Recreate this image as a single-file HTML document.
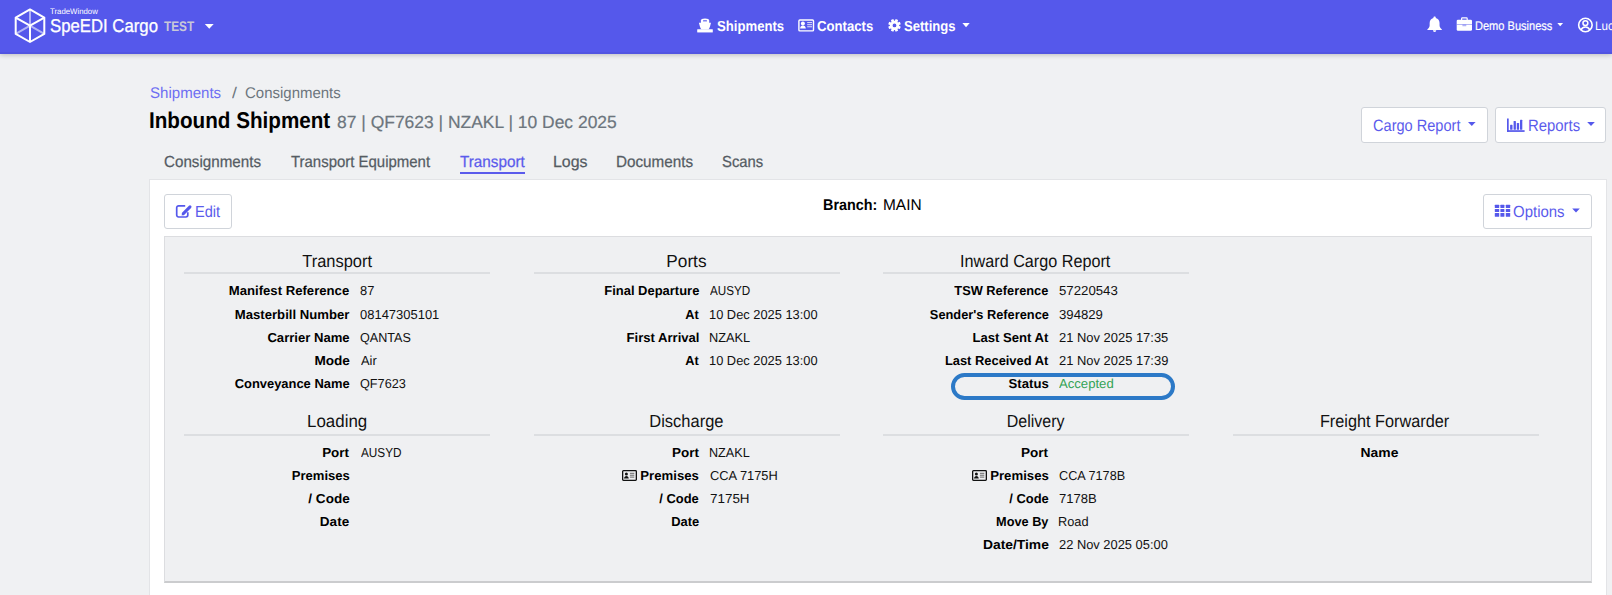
<!DOCTYPE html><html><head><meta charset="utf-8"><style>
*{margin:0;padding:0;box-sizing:border-box}
html,body{width:1612px;height:595px;overflow:hidden;background:#f0f1f3;font-family:"Liberation Sans",sans-serif}
.t{position:absolute;white-space:nowrap;line-height:1;text-rendering:geometricPrecision}
.abs{position:absolute}
svg{position:absolute;overflow:visible}
#nav{position:absolute;left:0;top:0;width:1612px;height:54px;background:#5558eb;box-shadow:inset 0 -2px 0 rgba(0,0,0,.04),0 1px 5px rgba(0,0,0,.22)}
.btn{position:absolute;background:#fff;border:1px solid #d0d4da;border-radius:3px}
#card{position:absolute;left:149px;top:179px;width:1458px;height:430px;background:#fff;border:1px solid #e3e4e7}
#panel{position:absolute;left:164px;top:236px;width:1428px;height:347px;background:#eff0f2;border:1px solid #dcdde0;border-bottom:2px solid #cbccce}
.hl{position:absolute;height:2px;background:#dcdee1;width:306px}
</style></head><body>
<div id="nav"></div>
<div class="t" style="top:8px;font-size:8px;font-weight:400;color:#ffffff;left:50.22px;transform-origin:0 0;transform:scaleX(0.9742);">TradeWindow</div>
<div class="t" style="top:17px;font-size:18.5px;font-weight:400;color:#ffffff;left:49.63px;transform-origin:0 0;transform:scaleX(0.9049);-webkit-text-stroke:0.3px #fff">SpeEDI Cargo</div>
<div class="t" style="top:19px;font-size:14px;font-weight:700;color:#c8c8d8;left:163.96px;transform-origin:0 0;transform:scaleX(0.8426);">TEST</div>
<div class="t" style="top:20px;font-size:14.5px;font-weight:700;color:#ffffff;left:716.50px;transform-origin:0 0;transform:scaleX(0.9061);">Shipments</div>
<div class="t" style="top:20px;font-size:14.5px;font-weight:700;color:#ffffff;left:817.34px;transform-origin:0 0;transform:scaleX(0.9072);">Contacts</div>
<div class="t" style="top:20px;font-size:14.5px;font-weight:700;color:#ffffff;left:904.00px;transform-origin:0 0;transform:scaleX(0.9028);">Settings</div>
<div class="t" style="top:20px;font-size:12.5px;font-weight:400;color:#ffffff;left:1474.51px;transform-origin:0 0;transform:scaleX(0.8838);-webkit-text-stroke:0.2px #fff">Demo Business</div>
<div class="t" style="top:20px;font-size:12.5px;font-weight:400;color:#ffffff;left:1594.66px;transform-origin:0 0;transform:scaleX(0.9300);">Luc</div>
<div class="t" style="top:86px;font-size:15.5px;font-weight:400;color:#6e6ef2;left:149.91px;transform-origin:0 0;transform:scaleX(0.9714);">Shipments</div>
<div class="t" style="top:86px;font-size:15.5px;font-weight:400;color:#6c757d;left:232.00px;transform-origin:0 0;transform:scaleX(1.1416);">/</div>
<div class="t" style="top:86px;font-size:15.5px;font-weight:400;color:#6c757d;left:245.35px;transform-origin:0 0;transform:scaleX(0.9666);">Consignments</div>
<div class="t" style="top:109px;font-size:22.8px;font-weight:700;color:#000;left:149.25px;transform-origin:0 0;transform:scaleX(0.9059);">Inbound Shipment</div>
<div class="t" style="top:114px;font-size:17.5px;font-weight:400;color:#6c757d;left:336.66px;transform-origin:0 0;transform:scaleX(0.9973);-webkit-text-stroke:0.2px #6c757d">87 | QF7623 | NZAKL | 10 Dec 2025</div>
<div class="t" style="top:155px;font-size:16px;font-weight:400;color:#555c63;left:163.74px;transform-origin:0 0;transform:scaleX(0.9482);-webkit-text-stroke:0.25px #555c63">Consignments</div>
<div class="t" style="top:155px;font-size:16px;font-weight:400;color:#555c63;left:290.75px;transform-origin:0 0;transform:scaleX(0.9345);-webkit-text-stroke:0.25px #555c63">Transport Equipment</div>
<div class="t" style="top:155px;font-size:16px;font-weight:400;color:#5b5bec;left:459.65px;transform-origin:0 0;transform:scaleX(0.9557);-webkit-text-stroke:0.25px #5b5bec">Transport</div>
<div class="t" style="top:155px;font-size:16px;font-weight:400;color:#555c63;left:552.61px;transform-origin:0 0;transform:scaleX(0.9951);-webkit-text-stroke:0.25px #555c63">Logs</div>
<div class="t" style="top:155px;font-size:16px;font-weight:400;color:#555c63;left:615.57px;transform-origin:0 0;transform:scaleX(0.9522);-webkit-text-stroke:0.25px #555c63">Documents</div>
<div class="t" style="top:155px;font-size:16px;font-weight:400;color:#555c63;left:721.62px;transform-origin:0 0;transform:scaleX(0.9259);-webkit-text-stroke:0.25px #555c63">Scans</div>
<div class="abs" style="left:459.6px;top:171.5px;width:65px;height:2px;background:#5b5bec"></div>
<div class="btn" style="left:1361px;top:107px;width:127px;height:36px"></div>
<div class="btn" style="left:1495px;top:107px;width:111px;height:36px"></div>
<div class="t" style="top:118px;font-size:16.5px;font-weight:400;color:#5b5bec;left:1373.27px;transform-origin:0 0;transform:scaleX(0.8832);">Cargo Report</div>
<div class="t" style="top:118px;font-size:16.5px;font-weight:400;color:#5b5bec;left:1527.70px;transform-origin:0 0;transform:scaleX(0.9025);">Reports</div>
<div id="card"></div>
<div class="btn" style="left:164px;top:194px;width:68px;height:35px"></div>
<div class="t" style="top:205px;font-size:16px;font-weight:400;color:#5b5bec;left:194.62px;transform-origin:0 0;transform:scaleX(0.9100);">Edit</div>
<div class="btn" style="left:1483px;top:194px;width:109px;height:35px"></div>
<div class="t" style="top:205px;font-size:16px;font-weight:400;color:#5b5bec;left:1513.41px;transform-origin:0 0;transform:scaleX(0.9360);">Options</div>
<div class="t" style="top:198px;font-size:15.5px;font-weight:700;color:#000;left:823.36px;transform-origin:0 0;transform:scaleX(0.9287);">Branch:</div>
<div class="t" style="top:198px;font-size:15.5px;font-weight:400;color:#000;left:883.35px;transform-origin:0 0;transform:scaleX(0.9960);">MAIN</div>
<div id="panel"></div>
<div class="t" style="top:253px;font-size:17.5px;font-weight:400;color:#111;left:299.60px;transform-origin:37.12px 0;transform:scaleX(0.9403);">Transport</div>
<div class="hl" style="left:184px;top:272px"></div>
<div class="t" style="top:413px;font-size:17.5px;font-weight:400;color:#111;left:305.76px;transform-origin:31.14px 0;transform:scaleX(0.9654);">Loading</div>
<div class="hl" style="left:184px;top:433.5px"></div>
<div class="t" style="top:253px;font-size:17.5px;font-weight:400;color:#111;left:665.67px;transform-origin:20.42px 0;transform:scaleX(0.9836);">Ports</div>
<div class="hl" style="left:533.6px;top:272px"></div>
<div class="t" style="top:413px;font-size:17.5px;font-weight:400;color:#111;left:646.51px;transform-origin:39.39px 0;transform:scaleX(0.9426);">Discharge</div>
<div class="hl" style="left:533.6px;top:433.5px"></div>
<div class="t" style="top:253px;font-size:17.5px;font-weight:400;color:#111;left:953.81px;transform-origin:81.22px 0;transform:scaleX(0.9249);">Inward Cargo Report</div>
<div class="hl" style="left:883.2px;top:272px"></div>
<div class="t" style="top:413px;font-size:17.5px;font-weight:400;color:#111;left:1003.58px;transform-origin:31.60px 0;transform:scaleX(0.9138);">Delivery</div>
<div class="hl" style="left:883.2px;top:433.5px"></div>
<div class="t" style="top:413px;font-size:17.5px;font-weight:400;color:#111;left:1314.99px;transform-origin:69.53px 0;transform:scaleX(0.9296);">Freight Forwarder</div>
<div class="hl" style="left:1232.8px;top:433.5px"></div>
<div class="t" style="top:284px;font-size:13px;font-weight:700;color:#000;left:230.40px;width:121.21px;transform-origin:119.21px 0;transform:scaleX(1.0106);">Manifest Reference</div>
<div class="t" style="top:284px;font-size:13px;font-weight:400;color:#111;left:360.05px;transform-origin:0 0;transform:scaleX(0.9925);">87</div>
<div class="t" style="top:308px;font-size:13px;font-weight:700;color:#000;left:236.00px;width:115.41px;transform-origin:113.41px 0;transform:scaleX(1.0111);">Masterbill Number</div>
<div class="t" style="top:308px;font-size:13px;font-weight:400;color:#111;left:360.10px;transform-origin:0 0;transform:scaleX(0.9974);">08147305101</div>
<div class="t" style="top:331px;font-size:13px;font-weight:700;color:#000;left:267.95px;width:83.66px;transform-origin:81.66px 0;transform:scaleX(1.0074);">Carrier Name</div>
<div class="t" style="top:331px;font-size:13px;font-weight:400;color:#111;left:360.02px;transform-origin:0 0;transform:scaleX(0.9688);">QANTAS</div>
<div class="t" style="top:354px;font-size:13px;font-weight:700;color:#000;left:315.72px;width:35.94px;transform-origin:33.94px 0;transform:scaleX(1.0475);">Mode</div>
<div class="t" style="top:354px;font-size:13px;font-weight:400;color:#111;left:360.55px;transform-origin:0 0;transform:scaleX(0.9872);">Air</div>
<div class="t" style="top:377px;font-size:13px;font-weight:700;color:#000;left:234.00px;width:117.61px;transform-origin:115.61px 0;transform:scaleX(0.9943);">Conveyance Name</div>
<div class="t" style="top:377px;font-size:13px;font-weight:400;color:#111;left:360.01px;transform-origin:0 0;transform:scaleX(0.9760);">QF7623</div>
<div class="t" style="top:284px;font-size:13px;font-weight:700;color:#000;left:603.80px;width:97.35px;transform-origin:95.35px 0;transform:scaleX(0.9973);">Final Departure</div>
<div class="t" style="top:284px;font-size:13px;font-weight:400;color:#111;left:710.36px;transform-origin:0 0;transform:scaleX(0.8980);">AUSYD</div>
<div class="t" style="top:308px;font-size:13px;font-weight:700;color:#000;left:685.10px;width:15.72px;transform-origin:13.72px 0;transform:scaleX(0.9811);">At</div>
<div class="t" style="top:308px;font-size:13px;font-weight:400;color:#111;left:709.41px;transform-origin:0 0;transform:scaleX(0.9880);">10 Dec 2025 13:00</div>
<div class="t" style="top:331px;font-size:13px;font-weight:700;color:#000;left:627.11px;width:74.49px;transform-origin:72.49px 0;transform:scaleX(1.0064);">First Arrival</div>
<div class="t" style="top:331px;font-size:13px;font-weight:400;color:#111;left:709.37px;transform-origin:0 0;transform:scaleX(0.9827);">NZAKL</div>
<div class="t" style="top:354px;font-size:13px;font-weight:700;color:#000;left:685.10px;width:15.72px;transform-origin:13.72px 0;transform:scaleX(0.9811);">At</div>
<div class="t" style="top:354px;font-size:13px;font-weight:400;color:#111;left:709.41px;transform-origin:0 0;transform:scaleX(0.9880);">10 Dec 2025 13:00</div>
<div class="t" style="top:284px;font-size:13px;font-weight:700;color:#000;left:953.24px;width:97.36px;transform-origin:95.36px 0;transform:scaleX(0.9863);">TSW Reference</div>
<div class="t" style="top:284px;font-size:13px;font-weight:400;color:#111;left:1058.94px;transform-origin:0 0;transform:scaleX(1.0159);">57220543</div>
<div class="t" style="top:308px;font-size:13px;font-weight:700;color:#000;left:927.74px;width:122.87px;transform-origin:120.87px 0;transform:scaleX(0.9846);">Sender's Reference</div>
<div class="t" style="top:308px;font-size:13px;font-weight:400;color:#111;left:1058.99px;transform-origin:0 0;transform:scaleX(1.0130);">394829</div>
<div class="t" style="top:331px;font-size:13px;font-weight:700;color:#000;left:972.95px;width:77.36px;transform-origin:75.36px 0;transform:scaleX(1.0081);">Last Sent At</div>
<div class="t" style="top:331px;font-size:13px;font-weight:400;color:#111;left:1058.85px;transform-origin:0 0;transform:scaleX(0.9945);">21 Nov 2025 17:35</div>
<div class="t" style="top:354px;font-size:13px;font-weight:700;color:#000;left:944.05px;width:106.28px;transform-origin:104.28px 0;transform:scaleX(0.9913);">Last Received At</div>
<div class="t" style="top:354px;font-size:13px;font-weight:400;color:#111;left:1058.85px;transform-origin:0 0;transform:scaleX(0.9954);">21 Nov 2025 17:39</div>
<div class="t" style="top:377px;font-size:13px;font-weight:700;color:#000;left:1009.01px;width:41.73px;transform-origin:39.73px 0;transform:scaleX(1.0103);">Status</div>
<div class="t" style="top:377px;font-size:13px;font-weight:400;color:#34a355;left:1059.45px;transform-origin:0 0;transform:scaleX(1.0094);">Accepted</div>
<div class="t" style="top:446px;font-size:13px;font-weight:700;color:#000;left:323.35px;width:28.00px;transform-origin:26.00px 0;transform:scaleX(1.0320);">Port</div>
<div class="t" style="top:446px;font-size:13px;font-weight:400;color:#111;left:360.55px;transform-origin:0 0;transform:scaleX(0.9048);">AUSYD</div>
<div class="t" style="top:469px;font-size:13px;font-weight:700;color:#000;left:291.90px;width:59.82px;transform-origin:57.82px 0;transform:scaleX(1.0044);">Premises</div>
<div class="t" style="top:492px;font-size:13px;font-weight:700;color:#000;left:309.92px;width:41.72px;transform-origin:39.72px 0;transform:scaleX(1.0421);">/ Code</div>
<div class="t" style="top:515px;font-size:13px;font-weight:700;color:#000;left:321.47px;width:30.18px;transform-origin:28.18px 0;transform:scaleX(1.0409);">Date</div>
<div class="t" style="top:446px;font-size:13px;font-weight:700;color:#000;left:672.86px;width:28.00px;transform-origin:26.00px 0;transform:scaleX(1.0360);">Port</div>
<div class="t" style="top:446px;font-size:13px;font-weight:400;color:#111;left:709.38px;transform-origin:0 0;transform:scaleX(0.9703);">NZAKL</div>
<svg style="left:622.4px;top:470.0px" width="15" height="11" viewBox="0 0 15 11"><rect x="0.65" y="0.65" width="13.7" height="9.7" rx="0.8" fill="none" stroke="#111" stroke-width="1.3"/><circle cx="4.4" cy="3.9" r="1.5" fill="#111"/><path d="M2,8.6 c0.2,-1.7 1.1,-2.6 2.4,-2.6 s2.2,0.9 2.4,2.6z" fill="#111"/><rect x="7.9" y="2.8" width="4.4" height="1" fill="#666"/><rect x="7.9" y="4.7" width="4.4" height="1" fill="#666"/><rect x="7.9" y="6.6" width="4.4" height="1" fill="#666"/></svg>
<div class="t" style="top:469px;font-size:13px;font-weight:700;color:#000;left:641.41px;width:59.82px;transform-origin:57.82px 0;transform:scaleX(1.0115);">Premises</div>
<div class="t" style="top:469px;font-size:13px;font-weight:400;color:#111;left:709.76px;transform-origin:0 0;transform:scaleX(0.9873);">CCA 7175H</div>
<div class="t" style="top:492px;font-size:13px;font-weight:700;color:#000;left:659.40px;width:41.72px;transform-origin:39.72px 0;transform:scaleX(0.9950);">/ Code</div>
<div class="t" style="top:492px;font-size:13px;font-weight:400;color:#111;left:709.73px;transform-origin:0 0;transform:scaleX(1.0328);">7175H</div>
<div class="t" style="top:515px;font-size:13px;font-weight:700;color:#000;left:670.95px;width:30.18px;transform-origin:28.18px 0;transform:scaleX(0.9950);">Date</div>
<div class="t" style="top:446px;font-size:13px;font-weight:700;color:#000;left:1022.36px;width:28.00px;transform-origin:26.00px 0;transform:scaleX(1.0400);">Port</div>
<svg style="left:971.9px;top:470.0px" width="15" height="11" viewBox="0 0 15 11"><rect x="0.65" y="0.65" width="13.7" height="9.7" rx="0.8" fill="none" stroke="#111" stroke-width="1.3"/><circle cx="4.4" cy="3.9" r="1.5" fill="#111"/><path d="M2,8.6 c0.2,-1.7 1.1,-2.6 2.4,-2.6 s2.2,0.9 2.4,2.6z" fill="#111"/><rect x="7.9" y="2.8" width="4.4" height="1" fill="#666"/><rect x="7.9" y="4.7" width="4.4" height="1" fill="#666"/><rect x="7.9" y="6.6" width="4.4" height="1" fill="#666"/></svg>
<div class="t" style="top:469px;font-size:13px;font-weight:700;color:#000;left:990.91px;width:59.82px;transform-origin:57.82px 0;transform:scaleX(1.0151);">Premises</div>
<div class="t" style="top:469px;font-size:13px;font-weight:400;color:#111;left:1058.87px;transform-origin:0 0;transform:scaleX(0.9730);">CCA 7178B</div>
<div class="t" style="top:492px;font-size:13px;font-weight:700;color:#000;left:1008.90px;width:41.72px;transform-origin:39.72px 0;transform:scaleX(0.9950);">/ Code</div>
<div class="t" style="top:492px;font-size:13px;font-weight:400;color:#111;left:1058.85px;transform-origin:0 0;transform:scaleX(1.0041);">7178B</div>
<div class="t" style="top:515px;font-size:13px;font-weight:700;color:#000;left:994.80px;width:55.46px;transform-origin:53.46px 0;transform:scaleX(0.9800);">Move By</div>
<div class="t" style="top:515px;font-size:13px;font-weight:400;color:#111;left:1058.47px;transform-origin:0 0;transform:scaleX(0.9829);">Road</div>
<div class="t" style="top:538px;font-size:13px;font-weight:700;color:#000;left:986.78px;width:63.89px;transform-origin:61.89px 0;transform:scaleX(1.0660);">Date/Time</div>
<div class="t" style="top:538px;font-size:13px;font-weight:400;color:#111;left:1058.86px;transform-origin:0 0;transform:scaleX(0.9903);">22 Nov 2025 05:00</div>
<div class="t" style="top:446px;font-size:13px;font-weight:700;color:#000;left:1362.83px;width:37.41px;transform-origin:35.41px 0;transform:scaleX(1.0688);">Name</div>
<svg style="left:0;top:0;width:1612px;height:595px" width="1612" height="595" viewBox="0 0 1612 595"><g fill="none" stroke="#fff" stroke-width="2" stroke-linejoin="round"><polygon points="30,9.4 44.3,17.6 44.3,33.9 30,42 15.7,33.9 15.7,17.6"/><path d="M15.7,17.6 L30,25.7 L44.3,17.6 M30,25.7 L30,42"/></g><path d="M30,9.4 L30,25.7 M15.7,33.9 L30,25.7 L44.3,33.9" stroke="#fff" stroke-opacity="0.55" stroke-width="2" fill="none"/><polygon points="204.8,24 213.7,24 209.25,28.8" fill="#fff"/><polygon points="962.4,23 969.7,23 966.05,27.2" fill="#fff"/><polygon points="1557.3,23 1563.1,23 1560.20,26.2" fill="#fff"/><polygon points="1468,122 1475.6,122 1471.80,126" fill="#5558eb"/><polygon points="1587.2,122 1594.8,122 1591.00,126" fill="#5558eb"/><polygon points="1572.2,208.5 1579.8,208.5 1576.00,212.5" fill="#5558eb"/><g fill="#fff"><path d="M700.9,23.2 V20.6 Q700.9,18.4 705,18.4 Q709.2,18.4 709.2,20.6 V23.2z"/><path d="M698.9,22.8 H711 L710,26.4 Q709.4,28.6 708.4,29.4 H701.5 Q700.5,28.6 699.9,26.4z"/><rect x="697.2" y="29.3" width="15.6" height="3.3" rx="0.5"/></g><rect x="703" y="20.1" width="4" height="1.5" rx="0.6" fill="#5558eb" opacity="0.75"/><path d="M697.5,32.3 h15" stroke="#5558eb" stroke-width="0.6" stroke-dasharray="1 1" opacity="0.5"/><rect x="798.9" y="20" width="14.6" height="10.9" rx="1" fill="none" stroke="#fff" stroke-width="1.4"/><circle cx="802.9" cy="23.4" r="2" fill="#fff"/><path d="M800.1,28.6 Q800.3,25.4 802.9,25.4 Q805.5,25.4 805.8,28.6z" fill="#fff"/><rect x="807.2" y="22" width="4.8" height="1.1" fill="#fff" opacity=".75"/><rect x="807.2" y="24.1" width="4.8" height="1.1" fill="#fff" opacity=".75"/><rect x="807.2" y="26.2" width="4.8" height="1.1" fill="#fff" opacity=".75"/><path d="M900.78,26.63 L899.81,28.98 L897.98,28.41 L897.51,28.88 L898.08,30.71 L895.73,31.68 L894.83,29.99 L894.17,29.99 L893.27,31.68 L890.92,30.71 L891.49,28.88 L891.02,28.41 L889.19,28.98 L888.22,26.63 L889.91,25.73 L889.91,25.07 L888.22,24.17 L889.19,21.82 L891.02,22.39 L891.49,21.92 L890.92,20.09 L893.27,19.12 L894.17,20.81 L894.83,20.81 L895.73,19.12 L898.08,20.09 L897.51,21.92 L897.98,22.39 L899.81,21.82 L900.78,24.17 L899.09,25.07 L899.09,25.73z M896.4,25.4 a1.9,1.9 0 1 0 -3.8,0 a1.9,1.9 0 1 0 3.8,0z" fill="#fff" fill-rule="evenodd"/><path d="M1434.6,16.5 c-0.75,0 -1.2,0.55 -1.2,1.25 v0.3 c-2.3,0.55 -3.75,2.5 -3.75,4.9 v2.2 c0,1.6 -0.9,2.9 -2.25,4.2 v0.55 h14.4 v-0.55 c-1.35,-1.3 -2.25,-2.6 -2.25,-4.2 v-2.2 c0,-2.4 -1.45,-4.35 -3.75,-4.9 v-0.3 c0,-0.7 -0.45,-1.25 -1.2,-1.25z M1432.9,30.2 a1.7,1.7 0 0 0 3.4,0z" fill="#fff"/><rect x="1461.6" y="17.9" width="5.6" height="2.6" rx="0.8" fill="none" stroke="#fff" stroke-width="1.2"/><rect x="1456.7" y="19.7" width="15.3" height="11.05" rx="1.3" fill="#fff"/><rect x="1456.7" y="24" width="15.3" height="0.8" fill="#5558eb" opacity=".55"/><rect x="1462.4" y="24.4" width="3.9" height="1.9" rx="0.4" fill="#5558eb" opacity=".45"/><g fill="none" stroke="#fff"><circle cx="1585.4" cy="25" r="6.75" stroke-width="1.6"/><circle cx="1585.4" cy="23.1" r="2.45" stroke-width="1.5"/><path d="M1581.1,30.1 Q1582,26.9 1585.4,26.9 Q1588.8,26.9 1589.7,30.1" stroke-width="1.5"/></g><path d="M185.2,205.9 h-6.6 a1.9,1.9 0 0 0 -1.9,1.9 v7.3 a1.9,1.9 0 0 0 1.9,1.9 h7.3 a1.9,1.9 0 0 0 1.9,-1.9 v-2.8" fill="none" stroke="#5558eb" stroke-width="1.7"/><path d="M183.3,213.6 L190,206.9" stroke="#5558eb" stroke-width="3" stroke-linecap="round"/><path d="M181.6,215.4 l0.6,-2.6 l2,2z" fill="#5558eb"/><g fill="#5558eb"><rect x="1494.8" y="204.8" width="4.4" height="3.2" rx="0.5"/><rect x="1494.8" y="208.9" width="4.4" height="3.2" rx="0.5"/><rect x="1494.8" y="213.0" width="4.4" height="3.8" rx="0.5"/><rect x="1500.4" y="204.8" width="4.0" height="3.2" rx="0.5"/><rect x="1500.4" y="208.9" width="4.0" height="3.2" rx="0.5"/><rect x="1500.4" y="213.0" width="4.0" height="3.8" rx="0.5"/><rect x="1505.8" y="204.8" width="4.4" height="3.2" rx="0.5"/><rect x="1505.8" y="208.9" width="4.4" height="3.2" rx="0.5"/><rect x="1505.8" y="213.0" width="4.4" height="3.8" rx="0.5"/></g><g fill="#5558eb"><rect x="1507" y="118.5" width="1.7" height="13.4"/><rect x="1507" y="130.2" width="17.6" height="1.7"/><rect x="1510.1" y="124.8" width="2.4" height="5" rx="0.6"/><rect x="1513.6" y="121" width="2.3" height="8.8" rx="0.6"/><rect x="1516.8" y="123" width="2.3" height="6.8" rx="0.6"/><rect x="1520" y="119.7" width="2.3" height="10.1" rx="0.6"/></g></svg>
<div class="abs" style="left:951px;top:373px;width:224px;height:27px;border:4px solid #2c79c7;border-radius:14px"></div>
</body></html>
